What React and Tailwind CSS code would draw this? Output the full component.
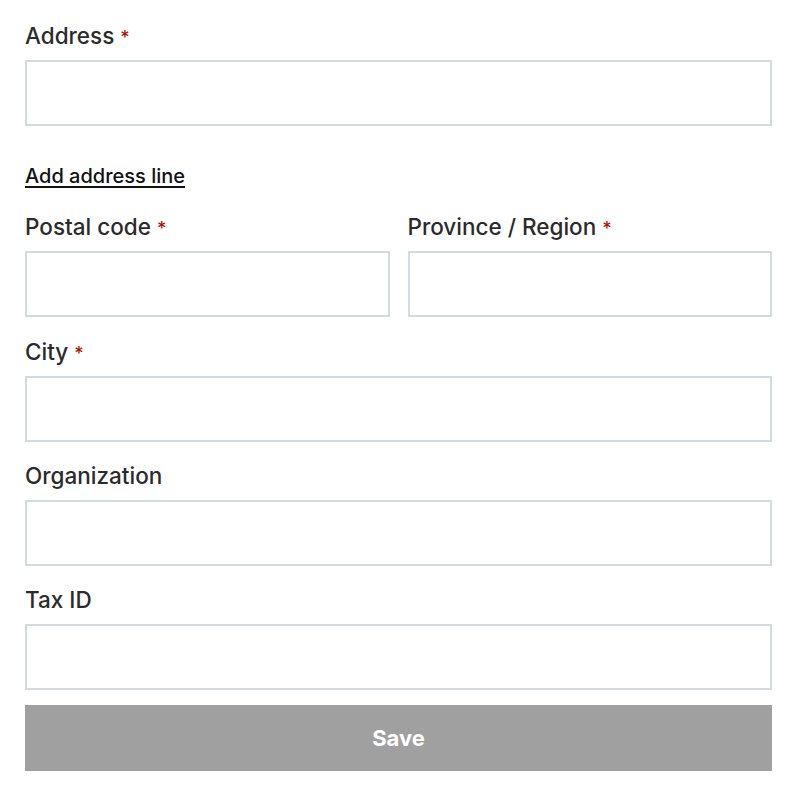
const Label = ({ children, required }) => (
  <label className="block h-6 mb-3 text-[22.5px] leading-6 font-medium text-[#2b2b2b]">
    {children}
    {required && <span className="ml-1.5 text-[18px] text-[#ae1302]">*</span>}
  </label>
);

const Input = () => (
  <input
    type="text"
    className="block w-full h-[66px] border-2 border-[#d4dbe0] bg-white px-4 outline-none"
  />
);

const Field = ({ label, required, className = "" }) => (
  <div className={className}>
    <Label required={required}>{label}</Label>
    <Input />
  </div>
);

export default function App() {
  return (
    <div
      className="min-h-screen bg-white px-[25px] pt-6 w-[797px]"
      style={{ fontFamily: "Inter, 'Noto Sans', sans-serif" }}
    >
      <form className="flex flex-col">
        <Field label="Address" required />

        <a
          href="#"
          className="mt-[38px] h-6 leading-6 text-[20px] font-medium text-[#111] underline underline-offset-[3px] decoration-2 self-start"
        >
          Add address line
        </a>

        <div className="mt-[27px] grid grid-cols-2 gap-[18px]">
          <Field label="Postal code" required />
          <Field label="Province / Region" required />
        </div>

        <Field label="City" required className="mt-[23px]" />
        <Field label="Organization" className="mt-[22px]" />
        <Field label="Tax ID" className="mt-[22px]" />

        <button
          type="button"
          className="mt-[15px] h-[66px] w-full bg-[#a0a0a0] text-white text-[22px] font-bold"
        >
          Save
        </button>
      </form>
    </div>
  );
}
